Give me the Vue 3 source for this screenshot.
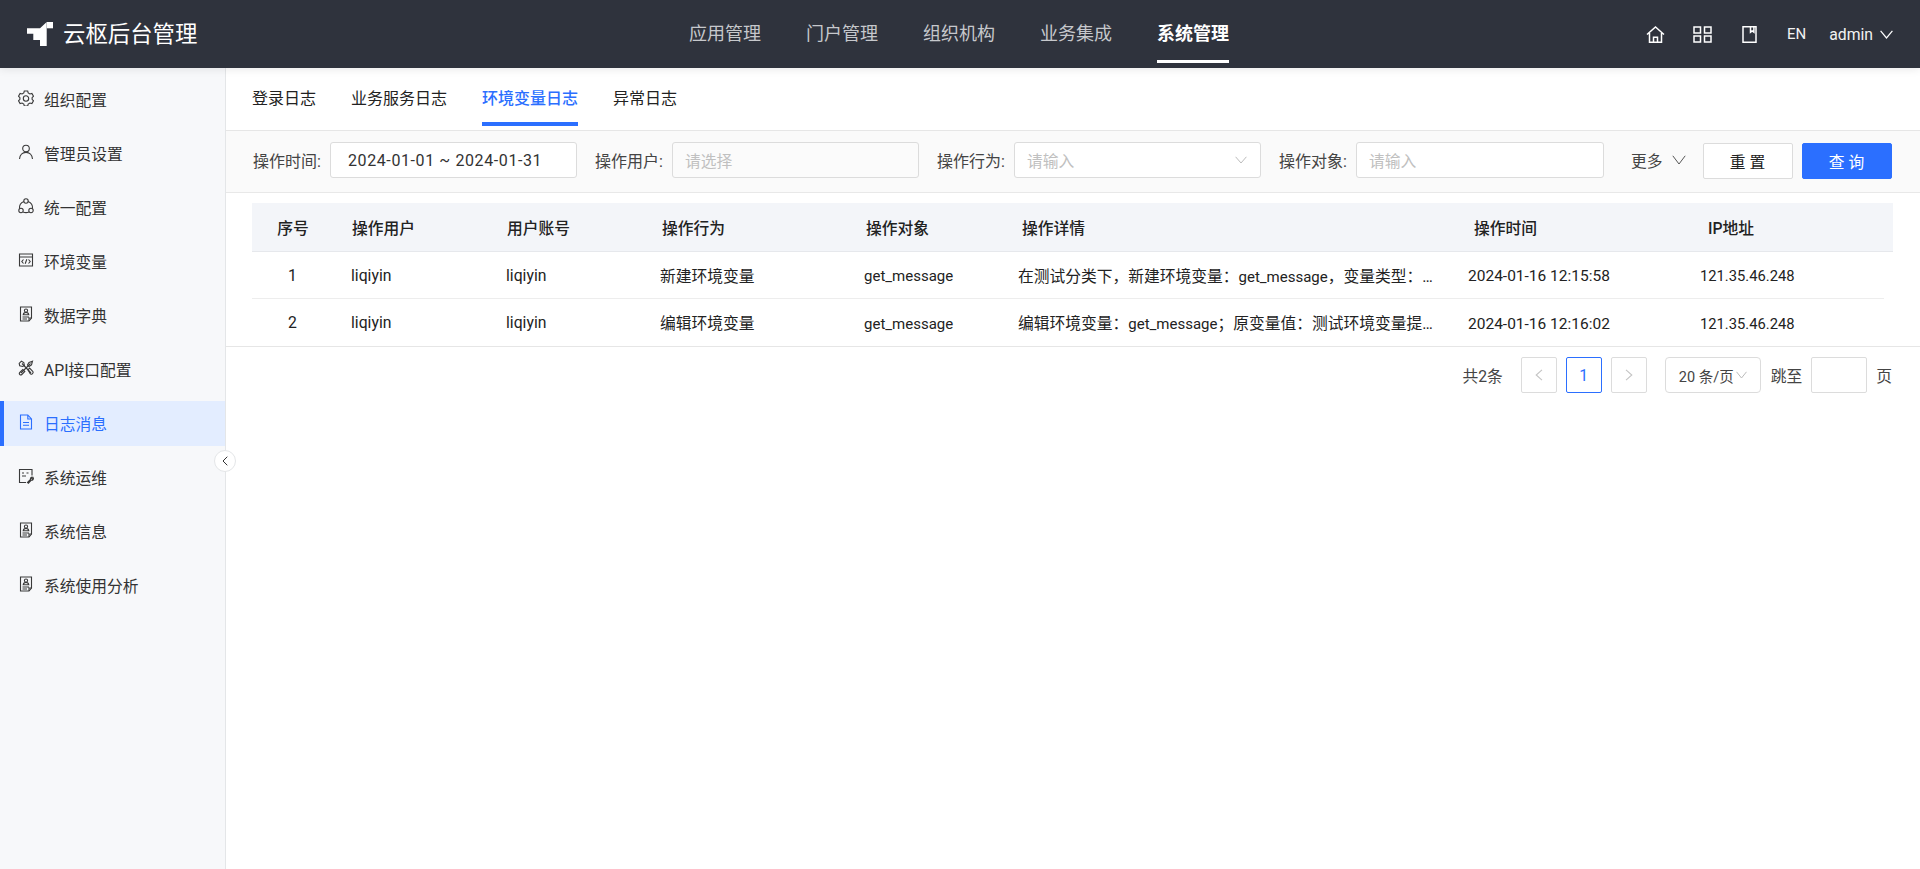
<template>
  <div class="page">
    <header class="topbar">
      <div class="brand">
        <svg class="logo" viewBox="0 0 26 24" width="26" height="24">
          <path d="M0 6.300h13L19.700 0v24H13v-6H6.300v-6.300H0z" fill="#fff" />
          <rect x="19.900" y="0" width="6.100" height="6.300" fill="#fff" />
        </svg>
        <span class="brand-name">云枢后台管理</span>
      </div>
      <nav class="main-nav">
        <a v-for="n in navItems" :key="n" class="nav-link" :class="{ on: n === '系统管理' }">{{ n }}</a>
      </nav>
      <div class="top-tools">
        <svg class="tool home" viewBox="0 0 19 17" width="19" height="17" fill="none" stroke="#fff" stroke-width="1.500">
          <path d="M1 8.500 9.500 1 18 8.500M3.500 7v9.200h12V7M7.500 16.200v-5h4v5" />
        </svg>
        <svg class="tool apps" viewBox="0 0 19 17" width="19" height="17" fill="none" stroke="#fff" stroke-width="1.500">
          <rect x="1" y="1" width="6.500" height="6" />
          <rect x="11.500" y="1" width="6.500" height="6" />
          <rect x="1" y="10" width="6.500" height="6" />
          <rect x="11.500" y="10" width="6.500" height="6" />
        </svg>
        <svg class="tool book" viewBox="0 0 15 17" width="15" height="17" fill="none" stroke="#fff" stroke-width="1.500">
          <path d="M1 .8h13v15.400H1zM8.500 .8v5.400l1.700-1.200 1.700 1.200V.8" />
        </svg>
        <span class="lang">EN</span>
        <span class="user">admin</span>
        <svg class="user-arrow" viewBox="0 0 13 9" width="13" height="9" fill="none" stroke="#fff" stroke-width="1.200">
          <path d="M.6 .8 6.500 8 12.400 .8" />
        </svg>
      </div>
    </header>

    <div class="body">
      <aside class="sidebar">
        <a v-for="m in menu" :key="m.label" class="menu-item" :class="{ on: m.active }">
          <svg class="menu-icon" viewBox="0 0 16 16" width="16" height="16" fill="none" stroke="currentColor" stroke-width="1.100">
            <path v-for="d in icons[m.icon]" :key="d" :d="d" />
          </svg>
          <span>{{ m.label }}</span>
        </a>
        <button class="collapse" type="button">
          <svg viewBox="0 0 6 10" width="6" height="10" fill="none" stroke="#333" stroke-width="1">
            <path d="M5.300 .7 1 5l4.300 4.300" />
          </svg>
        </button>
      </aside>

      <main class="content">
        <div class="tabs">
          <a v-for="t in tabs" :key="t" class="tab" :class="{ on: t === '环境变量日志' }">{{ t }}</a>
        </div>

        <div class="filters">
          <label class="f-label">操作时间:</label>
          <div class="field date">2024-01-01 ~ 2024-01-31</div>
          <label class="f-label">操作用户:</label>
          <div class="field ph muted">请选择</div>
          <label class="f-label">操作行为:</label>
          <div class="field ph select">
            <span>请输入</span>
            <svg viewBox="0 0 12 8" width="12" height="8" fill="none" stroke="#bbb" stroke-width="1">
              <path d="M.6 .8 6 7 11.400 .8" />
            </svg>
          </div>
          <label class="f-label">操作对象:</label>
          <div class="field ph wide">请输入</div>
          <a class="more">
            <span>更多</span>
            <svg viewBox="0 0 14 10" width="14" height="10" fill="none" stroke="#555" stroke-width="1">
              <path d="M.8 .8 7 9 13.200 .8" />
            </svg>
          </a>
          <button class="btn" type="button">重 置</button>
          <button class="btn primary" type="button">查 询</button>
        </div>

        <div class="table">
          <div class="t-head">
            <div v-for="h in heads" :key="h" class="th">{{ h }}</div>
          </div>
          <div v-for="r in rows" :key="r.no" class="t-row">
            <div class="td">{{ r.no }}</div>
            <div class="td">{{ r.user }}</div>
            <div class="td">{{ r.account }}</div>
            <div class="td">{{ r.action }}</div>
            <div class="td latin">{{ r.target }}</div>
            <div class="td detail">{{ r.before }}<span class="latin">{{ r.target }}</span>{{ r.after }}</div>
            <div class="td time">{{ r.time }}</div>
            <div class="td ip">{{ r.ip }}</div>
          </div>
        </div>

        <div class="pager">
          <span class="total">共2条</span>
          <a class="pg off">
            <svg viewBox="0 0 8 12" width="8" height="12" fill="none" stroke="#c4c4c4" stroke-width="1.100"><path d="M7 .8 1.200 6 7 11.200" /></svg>
          </a>
          <a class="pg cur">1</a>
          <a class="pg off">
            <svg viewBox="0 0 8 12" width="8" height="12" fill="none" stroke="#c4c4c4" stroke-width="1.100"><path d="M1 .8 6.800 6 1 11.200" /></svg>
          </a>
          <div class="size">
            <span>20 条/页</span>
            <svg viewBox="0 0 11 8" width="11" height="8" fill="none" stroke="#bbb" stroke-width="1"><path d="M.5 .8 5.500 7 10.500 .8" /></svg>
          </div>
          <span class="jump">跳至</span>
          <div class="jump-box"></div>
          <span class="page-unit">页</span>
        </div>
      </main>
    </div>
  </div>
</template>

<script setup>
const navItems = ['应用管理', '门户管理', '组织机构', '业务集成', '系统管理']
const tabs = ['登录日志', '业务服务日志', '环境变量日志', '异常日志']
const heads = ['序号', '操作用户', '用户账号', '操作行为', '操作对象', '操作详情', '操作时间', 'IP地址']

const doc = [
  'M2.500 1h11v11L11 15H2.500z',
  'M8 3a1.600 1.600 0 1 1 0 3.200A1.600 1.600 0 0 1 8 3zM5.200 8.800c.3-1.500 1.300-2.400 2.800-2.400s2.500.9 2.800 2.400z',
  'M4.500 11h6.500M4.500 13h4.500M13.500 12h-2.500v3',
]

const icons = {
  gear: [
    'M6.300 1h3.400l.5 2 1.700 1 2-.6 1.600 2.800-1.400 1.500v1.600l1.400 1.500-1.600 2.800-2-.6-1.700 1-.5 2H6.300l-.5-2-1.700-1-2 .6L.5 10.800l1.400-1.500V7.700L.5 6.200l1.600-2.800 2 .6 1.700-1z',
    'M8 5.800a2.700 2.700 0 1 1 0 5.400 2.700 2.700 0 0 1 0-5.400z',
  ],
  user: [
    'M8 1.200a3.300 3.300 0 1 1 0 6.600 3.300 3.300 0 0 1 0-6.600z',
    'M1.500 15c.3-3.900 3-6.600 6.500-6.600s6.200 2.700 6.500 6.600',
  ],
  share: [
    'M8 .8a2.200 2.200 0 1 1 0 4.400A2.200 2.200 0 0 1 8 .8zM3 10.300a2.200 2.200 0 1 1 0 4.400 2.200 2.200 0 0 1 0-4.400zM13 10.300a2.200 2.200 0 1 1 0 4.400 2.200 2.200 0 0 1 0-4.400z',
    'M5.900 3.400C3 4.500 1.200 7.200 1.500 10.600M10.100 3.400c2.900 1.100 4.700 3.800 4.400 7.200M5 14c1.900.8 4.100.8 6 0',
  ],
  code: [
    'M1.500 2h13v12h-13zM1.500 5h13',
    'M5.500 7.500 3.800 9.500l1.700 2M10.500 7.500l1.700 2-1.700 2M8.800 7.300 7.200 11.700',
  ],
  doc,
  tools: [
    'M4 3.500 13 13M12.500 3.500 3 13',
    'M1.200 3.400 3.400 1.200l2.400 1.300.6 3-1.700 1-3-.8zM10 9.800l1.600-1.700 3.100 3.300a1.300 1.300 0 0 1-.1 2l-.4.400a1.300 1.300 0 0 1-2-.1zM1.800 12.500l3-3 2 2-3 3a1.400 1.400 0 0 1-2-2z',
    'M14.500 1.200l-3.500 1.300L9.500 5l1.500 1.500 2.500-1.500z',
  ],
  log: [
    'M9.800 1H2.500v14h11V5zM9.800 1v4h3.700',
    'M5 8.500h6M5 11.200h6',
  ],
  ops: [
    'M14 7.500V1.500H1.500v13H8',
    'M4 5h2M4 8h4M8.500 5h2',
    'M9.500 14.500l3-3.200a1.700 1.700 0 0 1 2-2.100l-1 1.100.9.900 1-1a1.700 1.700 0 0 1-2.100 2l-2.900 3z',
  ],
}

const menu = [
  { label: '组织配置', icon: 'gear' },
  { label: '管理员设置', icon: 'user' },
  { label: '统一配置', icon: 'share' },
  { label: '环境变量', icon: 'code' },
  { label: '数据字典', icon: 'doc' },
  { label: 'API接口配置', icon: 'tools' },
  { label: '日志消息', icon: 'log', active: true },
  { label: '系统运维', icon: 'ops' },
  { label: '系统信息', icon: 'doc' },
  { label: '系统使用分析', icon: 'doc' },
]

const rows = [
  {
    no: 1,
    user: 'liqiyin',
    account: 'liqiyin',
    action: '新建环境变量',
    target: 'get_message',
    before: '在测试分类下，新建环境变量：',
    after: '，变量类型：字符串，变量值：测试',
    time: '2024-01-16 12:15:58',
    ip: '121.35.46.248',
  },
  {
    no: 2,
    user: 'liqiyin',
    account: 'liqiyin',
    action: '编辑环境变量',
    target: 'get_message',
    before: '编辑环境变量：',
    after: '；原变量值：测试环境变量提示信息，新变量值：测试',
    time: '2024-01-16 12:16:02',
    ip: '121.35.46.248',
  },
]
</script>

<style>
html,
body {
  margin: 0;
  background: #fff;
}
</style>

<style scoped>
.page {
  height: 869px;
  display: flex;
  flex-direction: column;
  overflow: hidden;
  font-family: Roboto, "Noto Sans CJK SC", sans-serif;
  font-size: 15.75px;
  color: #222;
}

.topbar {
  height: 68px;
  flex: none;
  display: flex;
  align-items: center;
  position: relative;
  z-index: 2;
  background: #2f333d;
  box-shadow: 0 2px 8px rgba(0, 0, 0, 0.08);
}

.brand {
  width: 689px;
  padding-left: 27px;
  box-sizing: border-box;
  display: flex;
  align-items: center;
  gap: 10px;
}

.logo {
  flex: none;
}

.brand-name {
  font-size: 22.4px;
  line-height: 30px;
  color: #fff;
}

.main-nav {
  display: flex;
  gap: 45px;
  height: 68px;
}

.nav-link {
  width: 72px;
  height: 63px;
  line-height: 67px;
  font-size: 18px;
  white-space: nowrap;
  color: #c6c8cc;
  box-sizing: border-box;
}

.nav-link.on {
  color: #fff;
  font-weight: 700;
  border-bottom: 3px solid #fff;
}

.top-tools {
  margin-left: auto;
  padding-right: 27px;
  display: flex;
  align-items: center;
  color: #f2f2f2;
}

.tool.apps {
  margin-left: 28px;
}

.tool.book {
  margin-left: 30px;
}

.lang {
  margin-left: 30px;
  font-size: 15px;
}

.user {
  margin-left: 23px;
}

.user-arrow {
  margin-left: 7px;
}

.body {
  flex: 1;
  display: flex;
  min-height: 0;
}

.sidebar {
  width: 226px;
  flex: none;
  position: relative;
  box-sizing: border-box;
  padding-top: 9px;
  display: flex;
  flex-direction: column;
  gap: 9px;
  background: #f7f8fa;
  border-right: 1px solid #e4e6e8;
}

.menu-item {
  height: 45px;
  display: flex;
  align-items: center;
  gap: 10px;
  padding-left: 18px;
  color: #333;
  white-space: nowrap;
}

.menu-item.on {
  color: #2b6fff;
  background: #e3edff;
  box-shadow: inset 4px 0 0 #2b6fff;
}

.menu-icon {
  flex: none;
  color: #3a3a3a;
  position: relative;
  top: -2px;
}

.menu-item.on .menu-icon {
  color: #2b6fff;
}

.collapse {
  position: absolute;
  top: 382px;
  right: -11px;
  width: 22px;
  height: 22px;
  padding: 0;
  border: 1px solid #e4e6e8;
  border-radius: 50%;
  background: #fff;
  display: flex;
  align-items: center;
  justify-content: center;
}

.content {
  flex: 1;
  min-width: 0;
}

.tabs {
  height: 63px;
  box-sizing: border-box;
  padding-left: 26px;
  display: flex;
  gap: 35px;
  border-bottom: 1px solid #e6e6e6;
  font-size: 16px;
}

.tab {
  height: 58px;
  box-sizing: border-box;
  line-height: 62px;
  color: #222;
  white-space: nowrap;
}

.tab.on {
  color: #2b6fff;
  font-weight: 500;
  border-bottom: 4px solid #2b6fff;
}

.filters {
  height: 62px;
  box-sizing: border-box;
  padding: 0 28px 3px 27px;
  display: flex;
  align-items: center;
  background: #fafafa;
  border-bottom: 1px solid #e8e8e8;
}

.f-label {
  width: 69px;
  margin-right: 8px;
  color: #444;
  font-size: 16px;
  white-space: nowrap;
}

.field {
  width: 247px;
  height: 36px;
  box-sizing: border-box;
  margin-right: 18px;
  padding: 0 13px 0 12px;
  display: flex;
  align-items: center;
  border: 1px solid #dcdcdc;
  border-radius: 3px;
  background: #fff;
  color: #333;
  white-space: nowrap;
}

.field.date {
  padding-left: 17px;
  font-size: 16px;
  letter-spacing: 0.6px;
}

.field.ph {
  color: #c0c0c0;
}

.field.muted {
  background: #fbfbfb;
}

.field.select {
  justify-content: space-between;
}

.field.wide {
  width: 248px;
}

.more {
  margin-left: 9px;
  display: flex;
  align-items: center;
  gap: 9px;
  color: #444;
}

.btn {
  width: 90px;
  height: 36px;
  position: relative;
  top: 1px;
  margin-left: 9px;
  padding: 0;
  border: 1px solid #dcdcdc;
  border-radius: 2px;
  background: #fff;
  font: inherit;
  color: #222;
}

.more + .btn {
  margin-left: 17px;
}

.btn.primary {
  border-color: #2b6fff;
  background: #2b6fff;
  color: #fff;
}

.table {
  padding: 10px 27px 0 26px;
  border-bottom: 1px solid #e6e6e6;
}

.t-head {
  height: 48px;
  display: grid;
  grid-template-columns: 82px 155px 155px 204px 156px 452px 234px 1fr;
  align-items: center;
  background: #f3f5f9;
  border-bottom: 1px solid #e6e8ec;
}

.th {
  padding-left: 18px;
  font-weight: 500;
  color: #222;
}

.th:first-child {
  padding-left: 0;
  text-align: center;
}

.t-row {
  width: 1632px;
  height: 47px;
  box-sizing: border-box;
  display: grid;
  grid-template-columns: 81px 155px 154px 204px 154px 450px 232px 1fr;
  align-items: center;
  border-bottom: 1px solid #ededed;
}

.t-row:last-child {
  border-bottom: 0;
}

.td {
  padding-left: 18px;
  color: #222;
  white-space: nowrap;
  min-width: 0;
}

.td:first-child {
  padding-left: 0;
  text-align: center;
}

.latin {
  font-size: 15px;
}

.td.latin,
.td.time,
.td.ip {
  padding-top: 2px;
}

.td.detail {
  padding-right: 8px;
  overflow: hidden;
  text-overflow: ellipsis;
}

.td.time {
  font-size: 15.5px;
}

.td.ip {
  font-size: 14.75px;
}

.pager {
  height: 36px;
  padding: 10px 28px 0 0;
  display: flex;
  align-items: center;
  justify-content: flex-end;
  color: #444;
}

.total {
  margin-right: 18px;
}

.pg {
  width: 36px;
  height: 36px;
  box-sizing: border-box;
  margin-right: 9px;
  display: flex;
  align-items: center;
  justify-content: center;
  border: 1px solid #dcdcdc;
  border-radius: 2px;
  color: #2b6fff;
}

.pg.cur {
  border-color: #2b6fff;
}

.size {
  width: 96px;
  height: 36px;
  box-sizing: border-box;
  margin-left: 9px;
  padding: 0 13px 0 13px;
  display: flex;
  align-items: center;
  justify-content: space-between;
  border: 1px solid #dcdcdc;
  border-radius: 4px;
  white-space: nowrap;
  font-size: 14.5px;
}

.jump {
  margin: 0 9px 0 10px;
}

.jump-box {
  width: 56px;
  height: 36px;
  box-sizing: border-box;
  margin-right: 9px;
  border: 1px solid #dcdcdc;
  border-radius: 2px;
}
</style>
